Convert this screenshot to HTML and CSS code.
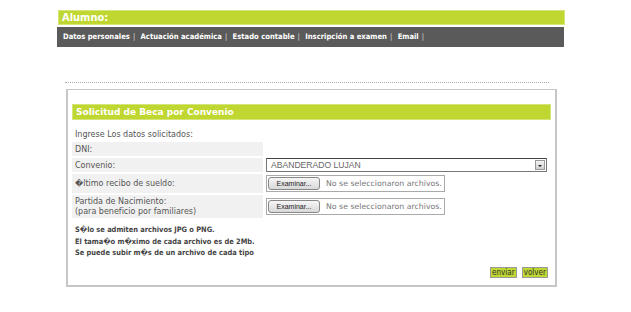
FILE: index.html
```html
<!DOCTYPE html>
<html lang="es">
<head>
    <meta charset="UTF-8">
    <title>Solicitud de Beca por Convenio</title>
    <link rel="stylesheet" href="styles.css">
</head>
<body>
    <!-- Cabecera del alumno -->
    <div class="top">
        <div class="alumno">Alumno:</div>
        <div class="nav">
            <a href="#">Datos personales</a><span class="sep">|</span>
            <a href="#">Actuación académica</a><span class="sep">|</span>
            <a href="#">Estado contable</a><span class="sep">|</span>
            <a href="#">Inscripción a examen</a><span class="sep">|</span>
            <a href="#">Email</a><span class="sep">|</span>
        </div>
    </div>

    <div class="dots"></div>

    <!-- Formulario -->
    <div class="box">
        <div class="box-title">Solicitud de Beca por Convenio</div>
        <table class="form">
            <tr>
                <td class="intro">Ingrese Los datos solicitados:</td>
                <td></td>
            </tr>
            <tr>
                <td class="label">DNI:</td>
                <td></td>
            </tr>
            <tr>
                <td class="label">Convenio:</td>
                <td>
                    <div class="select">
                        <span>ABANDERADO LUJAN</span>
                        <span class="arrow"></span>
                    </div>
                </td>
            </tr>
            <tr>
                <td class="label tall">�ltimo recibo de sueldo:</td>
                <td>
                    <div class="file">
                        <span class="file-btn">Examinar...</span>
                        <span>No se seleccionaron archivos.</span>
                    </div>
                </td>
            </tr>
            <tr>
                <td class="label two">Partida de Nacimiento:<br>(para beneficio por familiares)</td>
                <td>
                    <div class="file">
                        <span class="file-btn">Examinar...</span>
                        <span>No se seleccionaron archivos.</span>
                    </div>
                </td>
            </tr>
        </table>

        <p class="notes">
            S�lo se admiten archivos JPG o PNG.<br>
            El tama�o m�ximo de cada archivo es de 2Mb.<br>
            Se puede subir m�s de un archivo de cada tipo
        </p>

        <div class="actions">
            <button>enviar</button>
            <button>volver</button>
        </div>
    </div>
</body>
</html>
```

FILE: styles.css
```css
/* Общие стили */
body {
    margin: 0;
    font-family: 'DejaVu Sans', Verdana, sans-serif;
    background: #fff;
    color: #555;
}

/* Cabecera */
.top {
    margin: 10px 0 0 57px;
    width: 507px;
}

.alumno {
    margin-left: 1px;
    width: 502px;
    height: 13px;
    background-color: #bfd730;
    border: 1px solid #d4e57a;
    color: #fff;
    font-family: 'DejaVu Sans Condensed', 'DejaVu Sans', sans-serif;
    font-weight: bold;
    font-size: 11px;
    line-height: 13px;
    padding-left: 3px;
    box-sizing: content-box;
}

.nav {
    margin-top: 2px;
    height: 20px;
    background-color: #5a5a5a;
    color: #ddd;
    font-family: 'DejaVu Sans Condensed', 'DejaVu Sans', sans-serif;
    font-size: 7.6px;
    font-weight: bold;
    line-height: 20px;
    padding-left: 6px;
    white-space: nowrap;
}

.nav a {
    color: #fff;
    text-decoration: none;
}

.nav .sep {
    font-weight: normal;
    margin: 0 3px 0 3px;
}

.dots {
    margin: 35px 0 0 65px;
    width: 484px;
    border-top: 1px dotted #aaa;
}

/* Caja del formulario */
.box {
    margin: 6px 0 0 66px;
    width: 491px;
    height: 198px;
    border: 1px solid #c6c6c6;
    border-left-width: 2px;
    border-right-width: 2px;
    border-bottom-width: 2px;
    padding: 14px 4px 0 4px;
    box-sizing: border-box;
}

.box-title {
    height: 14px;
    background-color: #bfd730;
    border: 1px solid #d4e57a;
    color: #fff;
    font-weight: bold;
    font-size: 9px;
    line-height: 14px;
    padding-left: 3px;
}

.form {
    border-collapse: separate;
    border-spacing: 0 2px;
    margin-top: 6px;
    width: 100%;
    font-size: 8px;
}

.form td {
    padding: 0;
    vertical-align: middle;
}

.intro {
    width: 188px;
    height: 12px;
    padding-left: 3px !important;
}

.label {
    background-color: #f1f1f1;
    height: 14px;
    padding-left: 3px !important;
}

.label.tall {
    height: 19px;
}

.label.two {
    height: 23px;
    line-height: 10px;
}

.form td + td {
    padding-left: 3px;
}

.select {
    display: flex;
    align-items: center;
    justify-content: space-between;
    width: 281px;
    height: 14px;
    border: 1px solid #777;
    border-top-color: #444;
    box-sizing: border-box;
    padding-left: 4px;
    font-family: 'Liberation Sans', Arial, sans-serif;
    font-size: 8.6px;
    color: #666;
}

.arrow {
    width: 10px;
    height: 10px;
    margin-right: 1px;
    background: linear-gradient(#f4f4f4, #cfcfcf);
    border: 1px solid #999;
    box-sizing: border-box;
    position: relative;
}

.arrow::after {
    content: '';
    position: absolute;
    left: 2px;
    top: 4px;
    border-left: 2px solid transparent;
    border-right: 2px solid transparent;
    border-top: 2px solid #222;
}

.file {
    display: flex;
    align-items: center;
    gap: 6px;
    width: 179px;
    height: 17px;
    border: 1px solid #aaa;
    box-sizing: border-box;
    padding-left: 1px;
    color: #777;
    font-size: 7.8px;
}

.file-btn {
    width: 50px;
    height: 11px;
    border: 1px solid #888;
    border-radius: 3px;
    background: linear-gradient(#f6f6f6, #d8d8d8);
    color: #222;
    font-family: 'Liberation Sans', Arial, sans-serif;
    font-size: 7px;
    line-height: 11px;
    text-align: center;
}

.notes {
    margin: 4px 0 0 3px;
    font-family: 'DejaVu Sans Condensed', 'DejaVu Sans', sans-serif;
    font-size: 7.4px;
    line-height: 11.5px;
    font-weight: bold;
    color: #444;
}

.actions {
    display: flex;
    justify-content: flex-end;
    gap: 5px;
    margin-top: 8px;
    padding-right: 3px;
}

.actions button {
    background-color: #bfd730;
    border: 1px solid #999;
    padding: 0 1px;
    height: 11px;
    font-family: 'DejaVu Sans Condensed', 'DejaVu Sans', sans-serif;
    font-size: 8px;
    line-height: 9px;
    color: #333;
    cursor: pointer;
}
```
